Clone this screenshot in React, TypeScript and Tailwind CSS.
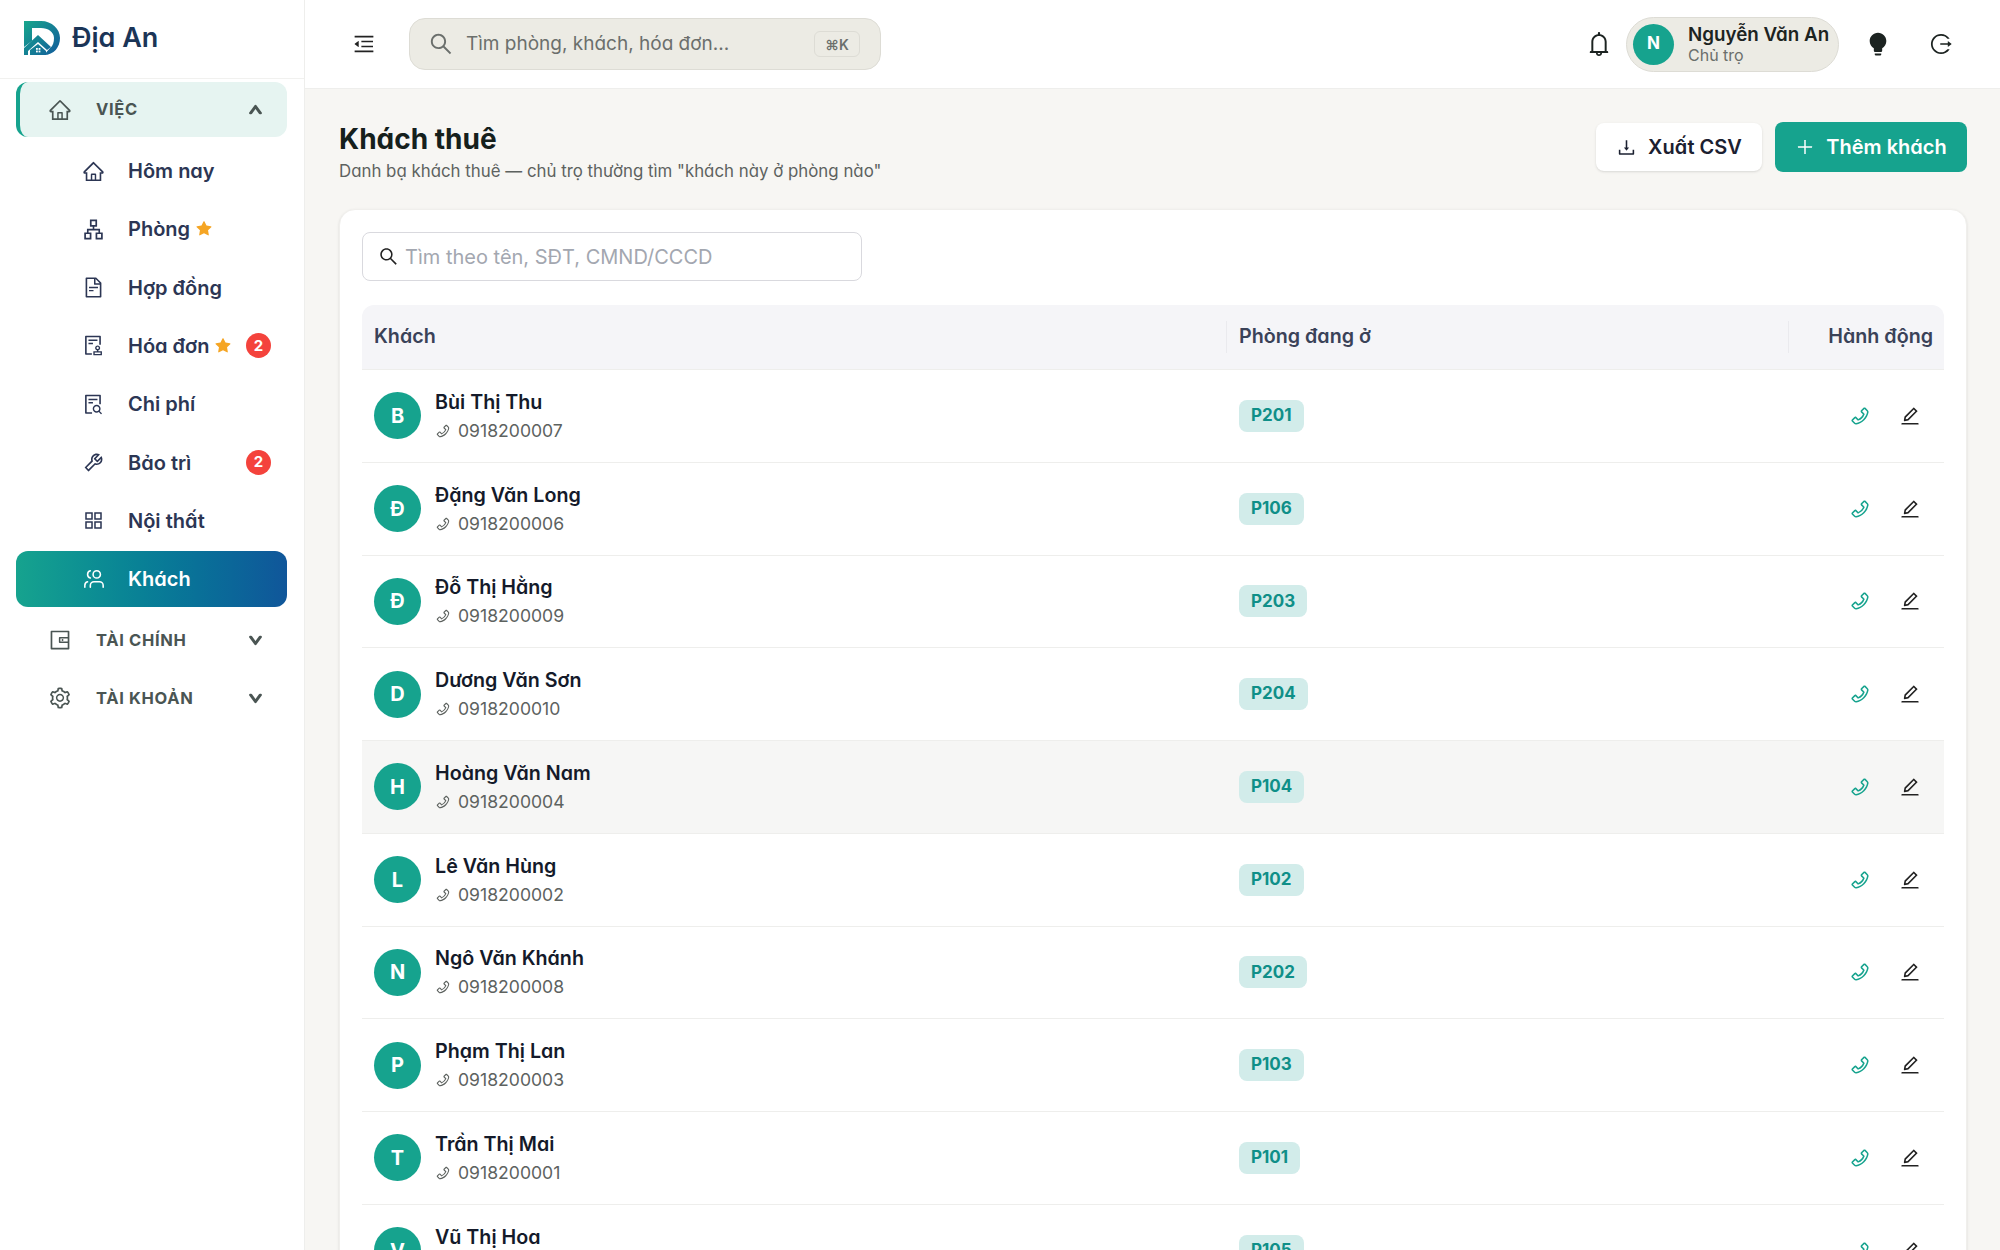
import React from 'react';
import {
  AiOutlineHome, AiOutlineApartment, AiOutlineFileText, AiOutlineAudit, AiOutlineFileSearch,
  AiOutlineTool, AiOutlineAppstore, AiOutlineWallet, AiOutlineSetting, AiFillStar,
  AiOutlineMenuFold, AiOutlineSearch, AiOutlineBell, AiFillBulb, AiOutlineLogout,
  AiOutlineDownload, AiOutlinePlus, AiOutlinePhone, AiOutlineEdit, AiOutlineUp, AiOutlineDown,
} from 'react-icons/ai';
import { Users } from 'lucide-react';

const subItems = [
  { label: 'Hôm nay', icon: AiOutlineHome },
  { label: 'Phòng', icon: AiOutlineApartment, star: true },
  { label: 'Hợp đồng', icon: AiOutlineFileText },
  { label: 'Hóa đơn', icon: AiOutlineAudit, star: true, count: 2 },
  { label: 'Chi phí', icon: AiOutlineFileSearch },
  { label: 'Bảo trì', icon: AiOutlineTool, count: 2 },
  { label: 'Nội thất', icon: AiOutlineAppstore },
];

const guests = [
  { name: 'Bùi Thị Thu', phone: '0918200007', room: 'P201' },
  { name: 'Đặng Văn Long', phone: '0918200006', room: 'P106' },
  { name: 'Đỗ Thị Hằng', phone: '0918200009', room: 'P203' },
  { name: 'Dương Văn Sơn', phone: '0918200010', room: 'P204' },
  { name: 'Hoàng Văn Nam', phone: '0918200004', room: 'P104' },
  { name: 'Lê Văn Hùng', phone: '0918200002', room: 'P102' },
  { name: 'Ngô Văn Khánh', phone: '0918200008', room: 'P202' },
  { name: 'Phạm Thị Lan', phone: '0918200003', room: 'P103' },
  { name: 'Trần Thị Mai', phone: '0918200001', room: 'P101' },
  { name: 'Vũ Thị Hoa', phone: '0918200005', room: 'P105' },
];

const Logo = () => (
  <svg width="36" height="34" viewBox="0 0 36 34" fill="none">
    <defs>
      <linearGradient id="logoFill" x1="0" y1="0" x2="36" y2="34" gradientUnits="userSpaceOnUse">
        <stop offset="0" stopColor="#17a68c" />
        <stop offset="1" stopColor="#125a9c" />
      </linearGradient>
    </defs>
    <path
      fill="url(#logoFill)"
      d="M0 0H17C28 0 36 8 36 17C36 26 30 34 20 34L26 27C29 25 30 21 30 17C30 11 24 7 17 7H8V20L0 26Z"
    />
    <path fill="url(#logoFill)" d="M0 27L14 14L27 26L23 29L14 21L4 30V34H0Z" />
    <path fill="url(#logoFill)" d="M6 29L14 23L22 30L22 34H6Z" />
    <rect x="12" y="27" width="1.8" height="1.8" fill="#fff" />
    <rect x="14.6" y="27" width="1.8" height="1.8" fill="#fff" />
    <rect x="12" y="29.6" width="1.8" height="1.8" fill="#fff" />
    <rect x="14.6" y="29.6" width="1.8" height="1.8" fill="#fff" />
  </svg>
);

const GroupRow = ({ icon: Icon, label }: { icon: React.ElementType; label: string }) => (
  <div className="flex h-[56px] items-center pl-[32px] pr-[24px] text-[#4a5553]">
    <Icon className="h-[24px] w-[24px] shrink-0" />
    <span className="ml-[24px] flex-1 text-[16.5px] font-bold tracking-[0.04em]">{label}</span>
    <AiOutlineDown className="h-[15px] w-[15px] stroke-[120]" />
  </div>
);

const Sidebar = () => (
  <aside className="flex h-full w-[305px] shrink-0 flex-col border-r border-[#eeeeec] bg-white">
    <div className="flex h-[79px] shrink-0 items-center gap-[12px] border-b border-[#f1f1ef] pb-[2px] pl-[24px]">
      <Logo />
      <span className="text-[27px] font-semibold text-[#1b3557]">Địa An</span>
    </div>
    <nav className="flex flex-col pl-[16px] pr-[17px] pt-[3px]">
      <div className="flex h-[55px] items-center rounded-xl border-l-4 border-[#16a38e] bg-[#e6f4f1] pl-[28px] pr-[24px] text-[#4a5553]">
        <AiOutlineHome className="h-[24px] w-[24px] shrink-0" />
        <span className="ml-[24px] flex-1 text-[16.5px] font-bold tracking-[0.04em]">VIỆC</span>
        <AiOutlineUp className="h-[15px] w-[15px] stroke-[120]" />
      </div>
      <div className="mt-[6px] flex flex-col gap-[2.33px]">
        {subItems.map(item => (
          <div key={item.label} className="flex h-[56px] items-center pl-[66px] pr-[16px] text-[#2c3654]">
            <item.icon className="h-[23px] w-[23px] shrink-0" />
            <span className="ml-[23px] text-[20px] font-semibold">{item.label}</span>
            {item.star && <AiFillStar className="ml-[5px] h-[18px] w-[18px] text-[#f5a524]" />}
            {item.count && (
              <span className="ml-auto flex h-[25px] w-[25px] items-center justify-center rounded-full bg-[#f4433c] text-[15px] font-bold text-white">
                {item.count}
              </span>
            )}
          </div>
        ))}
        <div className="flex h-[56px] items-center rounded-xl bg-gradient-to-r from-[#16a38e] to-[#10569a] pl-[67px] text-white">
          <Users className="h-[22px] w-[22px] shrink-0 -scale-x-100" strokeWidth={1.7} />
          <span className="ml-[23px] text-[20px] font-semibold">Khách</span>
        </div>
      </div>
      <div className="mt-[5px] flex flex-col gap-[2px]">
        <GroupRow icon={AiOutlineWallet} label="TÀI CHÍNH" />
        <GroupRow icon={AiOutlineSetting} label="TÀI KHOẢN" />
      </div>
    </nav>
  </aside>
);

const Header = () => (
  <header className="flex h-[89px] shrink-0 items-center justify-between border-b border-[#eeeeec] bg-white pl-[47px] pr-[47px]">
    <div className="flex items-center gap-[33px]">
      <AiOutlineMenuFold className="h-[24px] w-[24px] text-[#222]" />
      <div className="flex h-[52px] w-[472px] items-center rounded-2xl border border-[#dddcd5] bg-[#ecebe4] pl-[18px] pr-[20px]">
        <AiOutlineSearch className="h-[26px] w-[26px] text-[#6b6f6c]" />
        <span className="ml-[12px] flex-1 pt-[1px] text-[19px] text-[#6b6f6c]">Tìm phòng, khách, hóa đơn...</span>
        <span className="flex h-[26px] w-[46px] items-center justify-center rounded-md border border-[#dddcd5] text-[14px] font-semibold text-[#6b6f6c]">⌘K</span>
      </div>
    </div>
    <div className="flex items-center">
      <AiOutlineBell className="h-[28px] w-[28px] text-[#1c2321]" />
      <div className="ml-[13px] flex h-[55px] w-[213px] items-center rounded-full border border-[#dddcd5] bg-[#ecebe4] pl-[6px]">
        <span className="flex h-[41px] w-[41px] items-center justify-center rounded-full bg-[#16a38e] text-[17px] font-bold text-white">N</span>
        <div className="ml-[14px] flex flex-col">
          <span className="text-[18.8px] font-semibold leading-[22px] text-[#1c2321]">Nguyễn Văn An</span>
          <span className="text-[16px] leading-[18px] text-[#6b6f6c]">Chủ trọ</span>
        </div>
      </div>
      <AiFillBulb className="ml-[26px] h-[26px] w-[26px] text-[#1c2321]" />
      <AiOutlineLogout className="ml-[38px] h-[24px] w-[24px] text-[#1c2321]" />
    </div>
  </header>
);

const Row = ({ guest, hovered }: { guest: (typeof guests)[number]; hovered: boolean }) => (
  <div className={`grid h-[92.75px] grid-cols-[864px_562px_1fr] items-center border-b border-[#eeeeec] ${hovered ? 'bg-[#f6f6f5]' : ''}`}>
    <div className="flex items-center pl-[12px]">
      <span className="flex h-[47px] w-[47px] items-center justify-center rounded-full bg-[#16a38e] text-[20px] font-bold text-white">
        {guest.name[0]}
      </span>
      <div className="ml-[14px] flex flex-col">
        <span className="text-[19.7px] font-semibold leading-[28px] text-[#141a2a]">{guest.name}</span>
        <span className="mt-[2px] flex items-center text-[17.6px] leading-[26px] text-[#5d625f]">
          <AiOutlinePhone className="h-[16px] w-[16px] text-[#5d625f]" />
          <span className="ml-[7px]">{guest.phone}</span>
        </span>
      </div>
    </div>
    <div className="pl-[13px]">
      <span className="inline-flex h-[32px] items-center rounded-lg bg-[#d2ecea] px-[12px] text-[17px] font-bold text-[#0f8f88]">{guest.room}</span>
    </div>
    <div className="flex items-center justify-end gap-[28px] pr-[23px]">
      <AiOutlinePhone className="h-[22px] w-[22px] text-[#16a38e]" />
      <AiOutlineEdit className="h-[22px] w-[22px] text-[#222]" />
    </div>
  </div>
);

const App: React.FC = () => (
  <div className="flex h-screen overflow-hidden bg-[#f7f6f3] [font-family:Inter,'Noto_Sans',sans-serif] [font-feature-settings:'cv11']">
    <Sidebar />
    <div className="flex min-w-0 flex-1 flex-col">
      <Header />
      <main className="flex-1 overflow-hidden pl-[34px] pr-[33px] pt-[33px]">
        <div className="flex items-start justify-between">
          <div>
            <h1 className="text-[28px] font-bold leading-[34px] text-[#15201c]">Khách thuê</h1>
            <p className="mt-[3px] text-[16.85px] leading-[24px] text-[#5d625f]">Danh bạ khách thuê — chủ trọ thường tìm "khách này ở phòng nào"</p>
          </div>
          <div className="flex items-center gap-[13px]">
            <button className="flex h-[48px] w-[166px] items-center justify-center gap-[11px] rounded-lg bg-white text-[20px] font-semibold text-[#1b2030] shadow-sm">
              <AiOutlineDownload className="h-[21px] w-[21px]" />
              Xuất CSV
            </button>
            <button className="flex h-[50px] w-[192px] items-center justify-center gap-[11px] rounded-lg bg-[#16a38e] text-[20px] font-semibold text-white">
              <AiOutlinePlus className="h-[20px] w-[20px]" />
              Thêm khách
            </button>
          </div>
        </div>
        <section className="mt-[26px] rounded-2xl border border-[#f0efec] bg-white p-[22px] shadow-sm">
          <div className="flex h-[49px] w-[500px] items-center rounded-lg border border-[#d9d9de] bg-white pl-[15px]">
            <AiOutlineSearch className="h-[21px] w-[21px] text-[#222]" />
            <span className="ml-[6px] text-[20px] text-[#a3a7b0]">Tìm theo tên, SĐT, CMND/CCCD</span>
          </div>
          <div className="mt-[24px]">
            <div className="grid h-[65px] grid-cols-[864px_562px_1fr] items-center rounded-t-xl border-b border-[#eeeeec] bg-[#f5f5f8] text-[19.7px] font-semibold text-[#3a4258]">
              <span className="pl-[12px]">Khách</span>
              <span className="flex h-[32px] items-center border-l border-[#eaeaee] pl-[12px]">Phòng đang ở</span>
              <span className="flex h-[32px] items-center justify-end border-l border-[#eaeaee] pr-[11px]">Hành động</span>
            </div>
            {guests.map((g, i) => (
              <Row key={g.phone} guest={g} hovered={i === 4} />
            ))}
          </div>
        </section>
      </main>
    </div>
  </div>
);

export default App;
